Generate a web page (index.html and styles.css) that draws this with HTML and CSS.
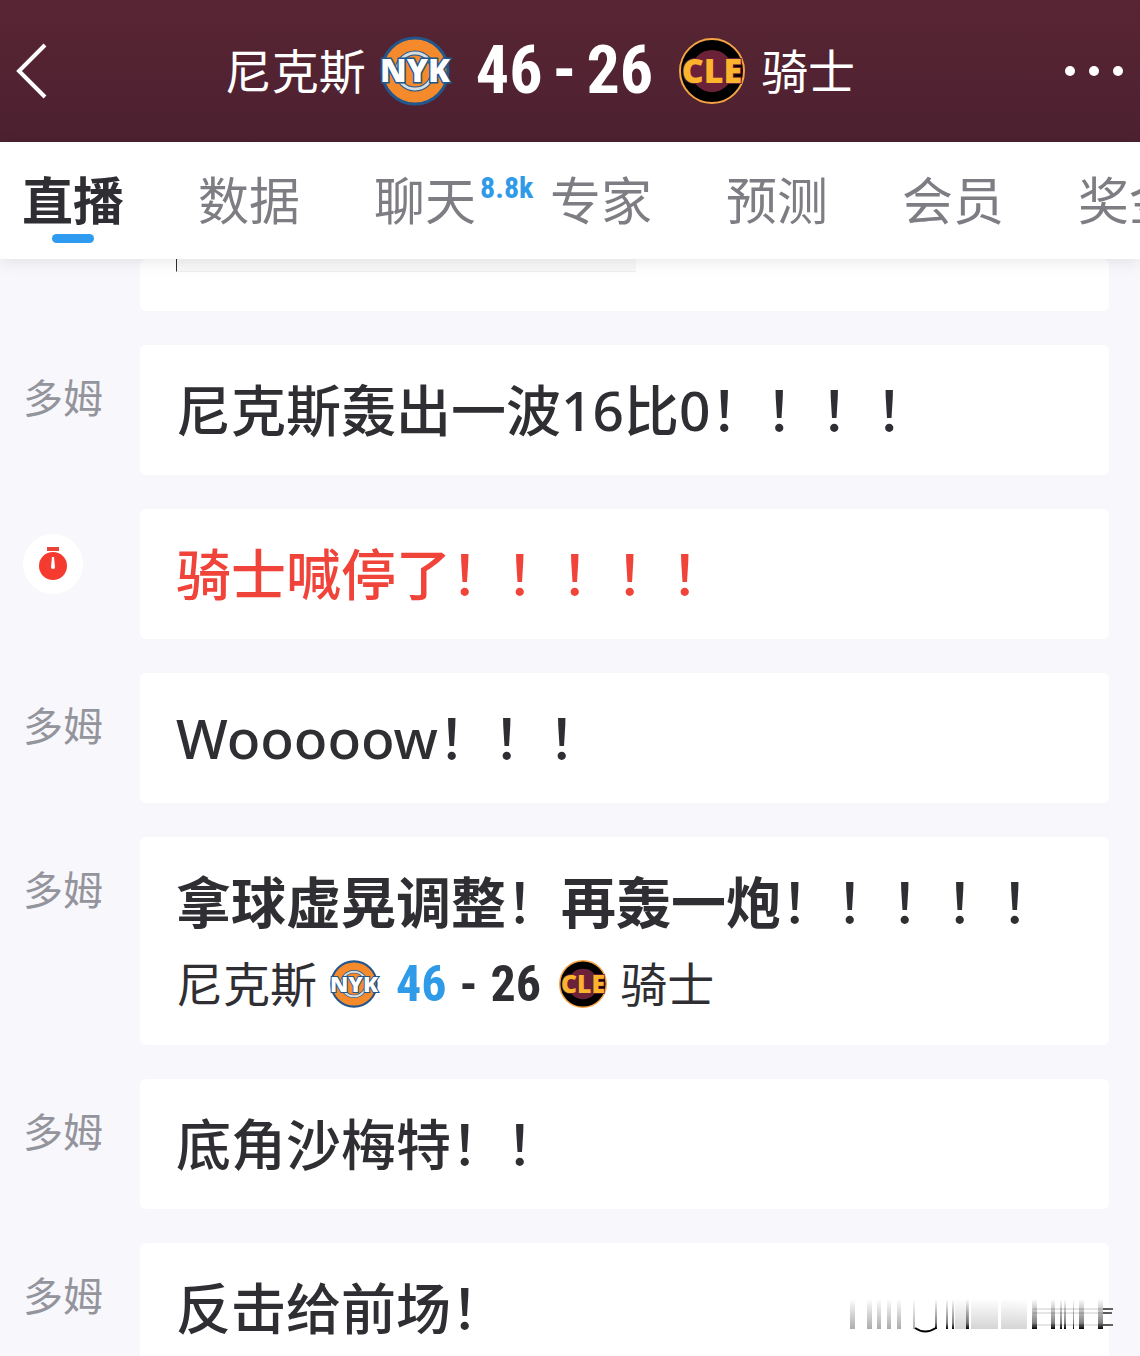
FILE: index.html
```
<!DOCTYPE html>
<html lang="zh-CN">
<head>
    <meta charset="UTF-8">
    <meta name="viewport" content="width=device-width, initial-scale=1.0">
    <title>尼克斯 46 - 26 骑士</title>
    <link rel="stylesheet" href="styles.css">
</head>
<body>
    <div class="app">
        <!-- Header -->
        <header>
            <button class="back" type="button" aria-label="返回">
                <svg width="32" height="56" viewBox="0 0 32 56"><path d="M29 2 L3 28 L29 54" fill="none" stroke="#fff" stroke-width="4"/></svg>
            </button>
            <h1 class="match">
                <span class="team">尼克斯</span>
                <svg class="logo logo-home" viewBox="0 0 70 70">
                    <circle cx="35" cy="35" r="33" fill="#f58a2c" stroke="#23568c" stroke-width="3"/>
                    <circle cx="35" cy="35" r="18" fill="#f58a2c" stroke="#23568c" stroke-width="5"/>
                    <circle cx="35" cy="35" r="18" fill="none" stroke="#d5dde0" stroke-width="3"/>
                    <text x="35" y="46" class="logo-text nyk-text">NYK</text>
                </svg>
                <span class="score"><span>46</span><span>-</span><span>26</span></span>
                <svg class="logo logo-away" viewBox="0 0 66 66">
                    <circle cx="33" cy="33" r="32" fill="#000" stroke="#f6a344" stroke-width="2"/>
                    <circle cx="33" cy="33" r="21" fill="#6b2238"/>
                    <text x="33" y="45" class="logo-text cle-text">CLE</text>
                </svg>
                <span class="team">骑士</span>
            </h1>
            <button class="more" type="button" aria-label="更多">
                <svg width="60" height="12" viewBox="0 0 60 12" fill="#fff"><circle cx="6" cy="6" r="5"/><circle cx="30" cy="6" r="5"/><circle cx="54" cy="6" r="5"/></svg>
            </button>
        </header>

        <!-- Tabs -->
        <nav>
            <a class="active" href="#live">直播</a>
            <a href="#stats">数据</a>
            <a href="#chat">聊天<span class="count">8.8k</span></a>
            <a href="#experts">专家</a>
            <a href="#predict">预测</a>
            <a href="#vip">会员</a>
            <a href="#prize">奖金</a>
        </nav>

        <!-- Live feed -->
        <main id="live">
            <div class="row">
                <div class="who"></div>
                <div class="card card-cut"><div class="quote"></div></div>
            </div>
            <div class="row">
                <div class="who">多姆</div>
                <div class="card"><p>尼克斯轰出一波16比0！！！！</p></div>
            </div>
            <div class="row">
                <div class="who">
                    <span class="timeout">
                        <svg width="28" height="34" viewBox="0 0 28 34">
                            <rect x="8" y="0" width="12" height="4" fill="#e8453a"/>
                            <circle cx="14" cy="19" r="14" fill="#f53b30"/>
                            <path d="M13 10 h2 l1 10 a2 2 0 1 1 -4 0 z" fill="#fff"/>
                        </svg>
                    </span>
                </div>
                <div class="card"><p class="alert">骑士喊停了！！！！！</p></div>
            </div>
            <div class="row">
                <div class="who">多姆</div>
                <div class="card"><p>Wooooow！！！</p></div>
            </div>
            <div class="row">
                <div class="who">多姆</div>
                <div class="card">
                    <p><b>拿球虚晃调整</b>！<b>再轰一炮</b>！！！！！</p>
                    <div class="match match-small">
                        <span class="team">尼克斯</span>
                        <svg class="logo" viewBox="0 0 70 70">
                            <circle cx="35" cy="35" r="33" fill="#f58a2c" stroke="#23568c" stroke-width="3"/>
                            <circle cx="35" cy="35" r="18" fill="#f58a2c" stroke="#23568c" stroke-width="5"/>
                            <circle cx="35" cy="35" r="18" fill="none" stroke="#d5dde0" stroke-width="3"/>
                            <text x="35" y="46" class="logo-text nyk-text">NYK</text>
                        </svg>
                        <span class="score"><span class="lead">46</span><span>-</span><span>26</span></span>
                        <svg class="logo" viewBox="0 0 66 66">
                            <circle cx="33" cy="33" r="32" fill="#000" stroke="#f6a344" stroke-width="2"/>
                            <circle cx="33" cy="33" r="21" fill="#6b2238"/>
                            <text x="33" y="45" class="logo-text cle-text">CLE</text>
                        </svg>
                        <span class="team">骑士</span>
                    </div>
                </div>
            </div>
            <div class="row">
                <div class="who">多姆</div>
                <div class="card"><p>底角沙梅特！！</p></div>
            </div>
            <div class="row">
                <div class="who">多姆</div>
                <div class="card"><p>反击给前场！</p></div>
            </div>
        </main>

        <!-- Faded stamp in the corner -->
        <svg class="stamp" width="266" height="36" viewBox="0 0 266 36" aria-hidden="true">
            <defs>
                <linearGradient id="light" x1="0" y1="0" x2="0" y2="1"><stop offset="0" stop-color="#888" stop-opacity="0"/><stop offset="1" stop-color="#888" stop-opacity="0.7"/></linearGradient>
                <linearGradient id="dark" x1="0" y1="0" x2="0" y2="1"><stop offset="0" stop-color="#000" stop-opacity="0"/><stop offset="0.8" stop-color="#000" stop-opacity="0.5"/><stop offset="1" stop-color="#000"/></linearGradient>
            </defs>
            <g fill="url(#light)">
                <rect x="1" y="0" width="5" height="30"/>
                <rect x="18" y="0" width="5" height="30"/>
                <rect x="28" y="0" width="4" height="30"/>
                <rect x="38" y="0" width="4" height="30"/>
                <rect x="48" y="0" width="4" height="30"/>
                <rect x="64" y="0" width="2" height="30"/>
            </g>
            <g fill="url(#light)" opacity="0.5">
                <rect x="106" y="0" width="13" height="30"/>
                <rect x="122" y="0" width="27" height="30"/>
                <rect x="152" y="0" width="26" height="30"/>
            </g>
            <g fill="url(#dark)">
                <rect x="86" y="0" width="2" height="30"/>
                <rect x="97" y="0" width="2" height="30"/>
                <rect x="103" y="0" width="2" height="30"/>
                <rect x="117" y="0" width="3" height="30"/>
                <rect x="183" y="0" width="5" height="30"/>
                <rect x="202" y="0" width="4" height="30"/>
                <rect x="211" y="0" width="2" height="30"/>
                <rect x="215" y="0" width="2" height="30"/>
                <rect x="224" y="0" width="1" height="30"/>
                <rect x="230" y="0" width="5" height="30"/>
                <rect x="249" y="0" width="5" height="30"/>
            </g>
            <path d="M66 29 Q76 36 87 29" fill="none" stroke="#000" stroke-width="2"/>
            <g stroke="#000">
                <path d="M184 10 H260 M184 14 H260 M184 26 H260" opacity="0.2"/>
                <path d="M254 10 H264 M254 14 H263 M254 26 H264" stroke-width="2" opacity="0.6"/>
            </g>
        </svg>
    </div>
</body>
</html>
```

FILE: styles.css
```
/* General Styles */
* {
    box-sizing: border-box;
}
body {
    margin: 0;
    font-family: "Noto Sans", "Noto Sans CJK SC", sans-serif;
    font-weight: 500;
    background: #f8f8fc;
    color: #2f2f33;
}
button {
    padding: 0;
    border: none;
    background: none;
    cursor: pointer;
}
svg {
    display: block;
    flex: none;
    overflow: visible;
}
.app {
    position: relative;
    height: 100vh;
    overflow: hidden;
}

/* Header */
header {
    display: flex;
    align-items: center;
    height: 142px;
    padding: 0 16px;
    background: linear-gradient(180deg, #582534, #4d2130);
    color: #fff;
}
.back {
    width: 32px;
}
.more {
    display: flex;
    justify-content: flex-end;
    width: 92px;
}

/* Team names with the score */
.match {
    display: flex;
    flex: 1;
    align-items: center;
    justify-content: center;
    margin: 0;
    font-size: 47px;
    font-weight: 400;
    line-height: 78px;
    white-space: nowrap;
}
.score {
    display: flex;
    gap: 10px;
    margin: 0 26px;
    font-family: "Roboto Condensed", "Roboto", sans-serif;
    font-size: 66px;
    font-weight: 700;
}
.logo-home {
    width: 70px;
    height: 70px;
    margin-left: 14px;
}
.logo-away {
    width: 66px;
    height: 66px;
    margin-right: 16px;
}
.logo-text {
    font-family: "Open Sans", sans-serif;
    font-weight: 800;
    text-anchor: middle;
}
.nyk-text {
    font-size: 32px;
    fill: #fff;
    stroke: #23568c;
    stroke-width: 3px;
    paint-order: stroke;
}
.cle-text {
    font-size: 34px;
    fill: #fcb42f;
    stroke: #6b2238;
    stroke-width: 2px;
    paint-order: stroke;
}

/* Tabs */
nav {
    position: relative;
    display: flex;
    gap: 74px;
    height: 117px;
    padding: 0 22px;
    background: #fff;
    box-shadow: 0 2px 16px rgba(0, 0, 0, 0.1);
}
nav a {
    position: relative;
    flex: none;
    color: #7d7d83;
    font-size: 51px;
    font-weight: 400;
    line-height: 117px;
    text-decoration: none;
}
nav .active {
    color: #2f2f33;
    font-weight: 700;
}
nav .active::after {
    content: "";
    position: absolute;
    left: 30px;
    bottom: 16px;
    width: 42px;
    height: 9px;
    border-radius: 5px;
    background: #2f9bf0;
}
.count {
    position: absolute;
    left: 100%;
    top: 28px;
    margin-left: 4px;
    color: #2f9be8;
    font-family: "Roboto Condensed", "Roboto", sans-serif;
    font-size: 30px;
    font-weight: 700;
    line-height: 36px;
}

/* Live feed */
main {
    display: flex;
    flex-direction: column;
    gap: 34px;
    padding-right: 31px;
}
.row {
    display: flex;
}
.who {
    flex: none;
    width: 140px;
    padding-left: 23px;
    color: #94949c;
    font-size: 40px;
    font-weight: 400;
    line-height: 106px;
}
.timeout {
    display: flex;
    align-items: center;
    justify-content: center;
    width: 60px;
    height: 60px;
    margin-top: 25px;
    border-radius: 50%;
    background: #fff;
}
.card {
    flex: 1;
    padding: 22px 36px;
    border-radius: 6px;
    background: #fff;
}
.card-cut {
    height: 52px;
    padding-top: 0;
}
.quote {
    width: 460px;
    height: 13px;
    border-bottom: 1px solid #eee;
    border-left: 1px solid #2f2f33;
    background: #f8f8f8;
}
.card p {
    margin: 0;
    font-size: 55px;
    line-height: 86px;
    white-space: nowrap;
}
.card .alert {
    color: #f0443a;
}
.match-small {
    justify-content: flex-start;
}
.match-small .logo {
    width: 48px;
    height: 48px;
    margin: 0 13px;
}
.match-small .score {
    gap: 13px;
    margin: 0 5px;
    font-size: 50px;
}
.lead {
    color: #2f9be8;
}

/* Corner stamp */
.stamp {
    position: absolute;
    right: 25px;
    bottom: 21px;
}
```
